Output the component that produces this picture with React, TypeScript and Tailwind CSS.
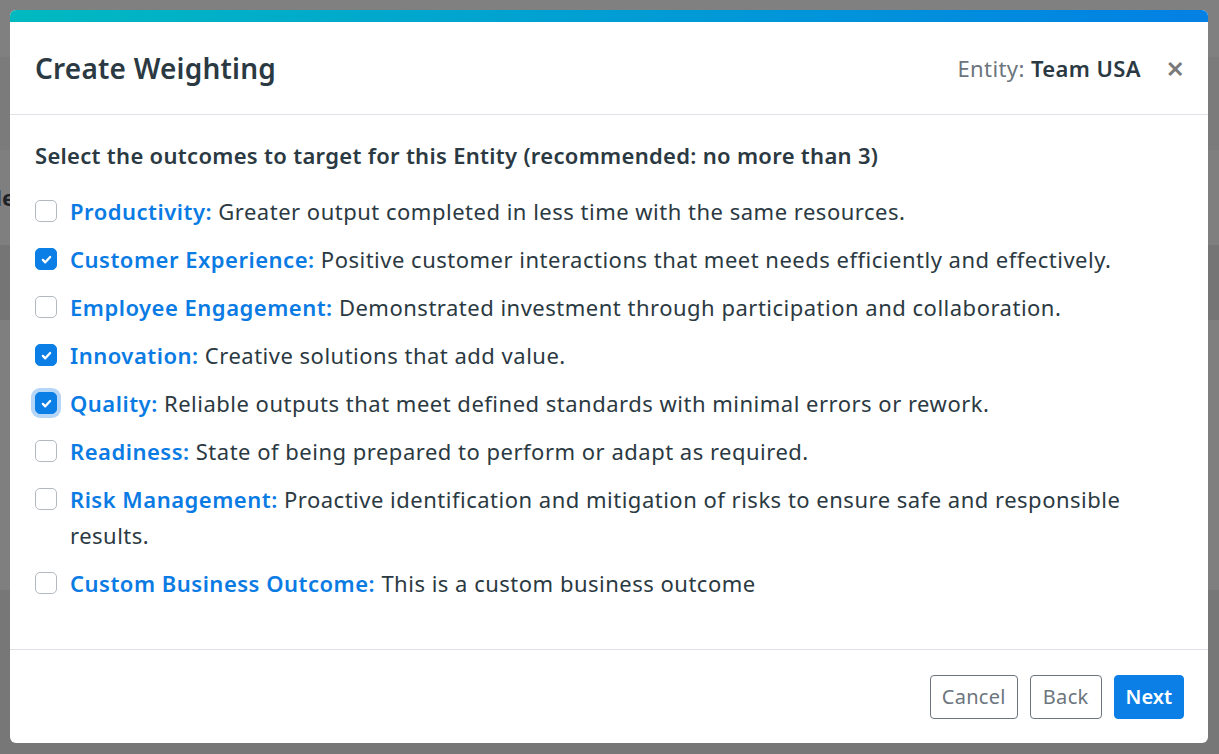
import React from "react";

type Outcome = {
  name: string;
  text: string;
  checked: boolean;
  focused?: boolean;
};

const outcomes: Outcome[] = [
  { name: "Productivity:", text: "Greater output completed in less time with the same resources.", checked: false },
  { name: "Customer Experience:", text: "Positive customer interactions that meet needs efficiently and effectively.", checked: true },
  { name: "Employee Engagement:", text: "Demonstrated investment through participation and collaboration.", checked: false },
  { name: "Innovation:", text: "Creative solutions that add value.", checked: true },
  { name: "Quality:", text: "Reliable outputs that meet defined standards with minimal errors or rework.", checked: true, focused: true },
  { name: "Readiness:", text: "State of being prepared to perform or adapt as required.", checked: false },
  { name: "Risk Management:", text: "Proactive identification and mitigation of risks to ensure safe and responsible results.", checked: false },
  { name: "Custom Business Outcome:", text: "This is a custom business outcome", checked: false },
];

function Checkbox({ checked, focused }: { checked: boolean; focused?: boolean }) {
  return (
    <span
      className={
        "mt-[7px] flex h-[22px] w-[22px] shrink-0 items-center justify-center rounded-[5px] border " +
        (checked ? "border-[#0b7fe6] bg-[#0b7fe6]" : "border-[#b4b9bf] bg-white") +
        (focused ? " ring-4 ring-[#b6d6f8]" : "")
      }
    >
      {checked && (
        <svg viewBox="0 0 16 16" className="h-[13px] w-[13px]">
          <path d="M3.5 8.5l3 3 6-6.5" fill="none" stroke="white" strokeWidth="2.8" strokeLinecap="round" strokeLinejoin="round" />
        </svg>
      )}
    </span>
  );
}

export default function App() {
  return (
    <div
      className="relative h-[754px] w-[1219px] overflow-hidden bg-[#7f7f7f]"
      style={{ fontFamily: '"Noto Sans", "Open Sans", sans-serif' }}
    >
      {/* page behind the backdrop */}
      <div className="absolute inset-0 flex flex-col">
        <div className="h-[57px] bg-[#808080]" />
        <div className="h-[93px] bg-[#7b7b7b]" />
        <div className="flex h-[95px] items-center bg-[#7f7f7f]">
          <span className="-ml-[12px] text-[22px] font-bold text-[#1f2328]">de</span>
        </div>
        <div className="h-[75px] bg-[#757575]" />
        <div className="h-[270px] bg-[#7f7f7f]" />
        <div className="flex-1 bg-[#777777]" />
      </div>

      <div className="relative ml-[10px] mt-[10px] flex h-[733px] w-[1198px] flex-col overflow-hidden rounded-[6px] bg-white">
        <div className="h-[12px] shrink-0 bg-gradient-to-r from-[#00b9c0] to-[#0580e4]" />

        <div className="flex h-[93px] shrink-0 items-center justify-between border-b border-[#dee2e6] pl-[25px] pr-[24px]">
          <h1 className="text-[28px] font-semibold tracking-[0.2px] text-[#2b3942]">Create Weighting</h1>
          <div className="flex items-center">
            <span className="text-[22px] tracking-[0.4px] text-[#6c757d]">
              Entity: <span className="font-semibold text-[#2b3942]">Team USA</span>
            </span>
            <span className="ml-[25px] text-[22px] font-bold leading-none text-[#7a7a7a]">✕</span>
          </div>
        </div>

        <div className="flex-1 border-b border-[#dee2e6] pl-[25px] pr-[25px] pt-[25px]">
          <p className="text-[22px] font-semibold leading-[30px] tracking-[0.3px] text-[#2b3942]">
            Select the outcomes to target for this Entity (recommended: no more than 3)
          </p>
          <div className="mt-[23px] flex flex-col gap-[12px]">
            {outcomes.map((o) => (
              <div key={o.name} className="flex items-start gap-[13px]">
                <Checkbox checked={o.checked} focused={o.focused} />
                <p className="text-[22px] leading-[36px] tracking-[0.5px] text-[#2b3942]">
                  <span className="font-semibold text-[#0b7be4]">{o.name}</span> {o.text}
                </p>
              </div>
            ))}
          </div>
        </div>

        <div className="flex h-[93px] shrink-0 items-center justify-end gap-[12px] pr-[24px]">
          <button className="h-[44px] rounded-[4px] border border-[#6c757d] px-[11px] text-[20px] tracking-[0.3px] text-[#6c757d]">
            Cancel
          </button>
          <button className="h-[44px] rounded-[4px] border border-[#6c757d] px-[12px] text-[20px] tracking-[0.3px] text-[#6c757d]">
            Back
          </button>
          <button className="h-[44px] rounded-[4px] border border-[#0b7fe6] bg-[#0b7fe6] px-[11px] text-[20px] font-semibold text-white">
            Next
          </button>
        </div>
      </div>
    </div>
  );
}
